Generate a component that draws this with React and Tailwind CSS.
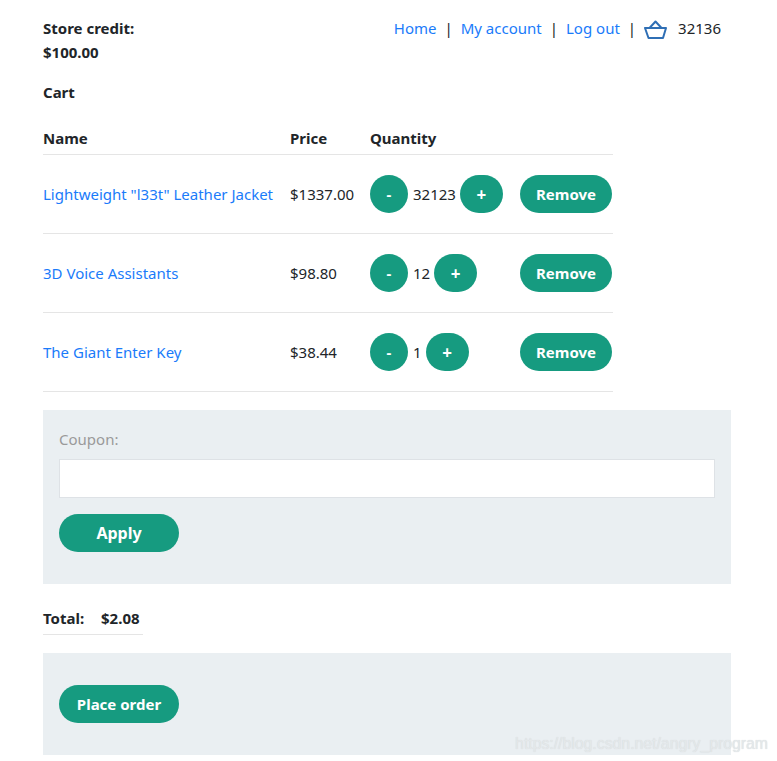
const ITEMS = [
  { name: 'Lightweight "l33t" Leather Jacket', price: "$1337.00", qty: 32123 },
  { name: "3D Voice Assistants", price: "$98.80", qty: 12 },
  { name: "The Giant Enter Key", price: "$38.44", qty: 1 },
];

const pill = "bg-[#169b80] text-white font-bold rounded-[19px] h-[38px]";

function BasketIcon() {
  return (
    <svg width="24" height="20" viewBox="0 0 24 20" fill="none" stroke="#2f6fb5" strokeWidth="2" strokeLinejoin="round">
      <path d="M1 8h21l-3 10H4.500L1 8z" />
      <path d="M5.500 8L11.500 1.500 17.500 8" />
    </svg>
  );
}

function Row({ item }) {
  return (
    <div className="flex items-center h-[79px] border-b border-[#e5e5e5]">
      <a className="w-[247px] text-[#1a7bfa]">{item.name}</a>
      <span className="w-[80px]">{item.price}</span>
      <div className="w-[150px] flex items-center">
        <button className={`${pill} w-[38px]`}>-</button>
        <span className="ml-[5px] mr-[4px]">{item.qty}</span>
        <button className={`${pill} w-[43px] text-[17px] pt-[2px]`}>+</button>
      </div>
      <button className={`${pill} w-[92px]`}>Remove</button>
    </div>
  );
}

export default function App() {
  return (
    <div className="relative h-[761px] overflow-hidden bg-white text-[#212529] text-[15px] leading-[24px] pl-[43px] pr-[46px] pt-[16px] font-['Noto_Sans',sans-serif]">
      <div className="flex justify-between">
        <div className="font-bold">
          <div>Store credit:</div>
          <div>$100.00</div>
        </div>
        <div className="flex items-start gap-[8px] pr-[10px]">
          <a className="text-[#1a7bfa]">Home</a>
          <span>|</span>
          <a className="text-[#1a7bfa]">My account</a>
          <span>|</span>
          <a className="text-[#1a7bfa]">Log out</a>
          <span>|</span>
          <span className="mt-[4px]"><BasketIcon /></span>
          <span className="ml-[2px]">32136</span>
        </div>
      </div>

      <div className="font-bold mt-[16px]">Cart</div>

      <div className="w-[570px] mt-[22px]">
        <div className="flex h-[29px] border-b border-[#e5e5e5] font-bold">
          <span className="w-[247px]">Name</span>
          <span className="w-[80px]">Price</span>
          <span>Quantity</span>
        </div>
        {ITEMS.map((item) => (
          <Row key={item.name} item={item} />
        ))}
      </div>

      <div className="mt-[18px] h-[174px] bg-[#eaeff2] px-[16px] pt-[17px]">
        <label className="block text-[#9a9a9a]">Coupon:</label>
        <input className="block w-full h-[39px] mt-[8px] bg-white border border-[#dee2e6]" />
        <button className={`${pill} w-[120px] mt-[16px] text-[16px]`}>Apply</button>
      </div>

      <div className="flex w-[100px] h-[34px] items-center mt-[17px] border-b border-[#e5e5e5] font-bold">
        <span className="w-[58px]">Total:</span>
        <span>$2.08</span>
      </div>

      <div className="mt-[18px] h-[102px] bg-[#eaeff2] px-[16px] pt-[32px]">
        <button className={`${pill} w-[120px]`}>Place order</button>
      </div>

      <div className="absolute right-[9px] top-[732px] text-[#e4e8ea] text-[15.800px] [text-shadow:0_0_1px_#d0d5d8] font-['Liberation_Sans',sans-serif]">
        https://blog.csdn.net/angry_program
      </div>
    </div>
  );
}
